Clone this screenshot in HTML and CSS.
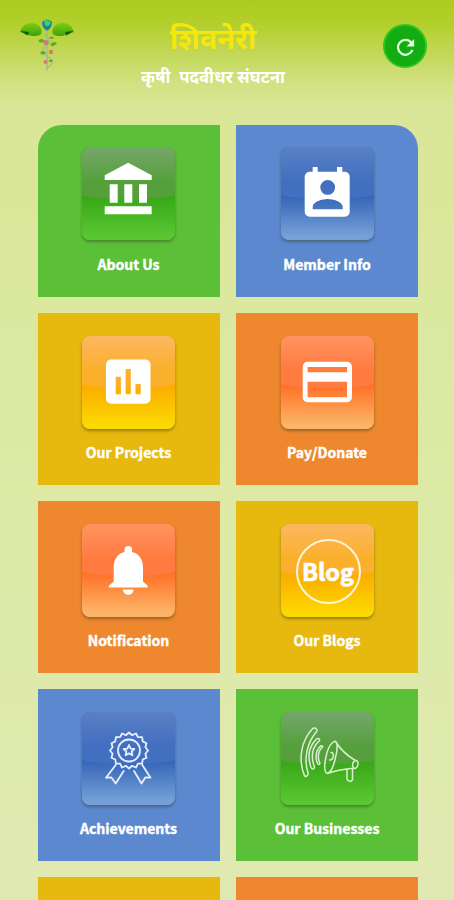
FILE: index.html
```html
<!DOCTYPE html>
<html lang="mr">
<head>
<meta charset="utf-8">
<meta name="viewport" content="width=device-width, initial-scale=1">
<title>शिवनेरी</title>
<link rel="stylesheet" href="styles.css">
</head>
<body>
<header class="header">
  <svg class="logo" viewBox="0 0 60 60">
    <defs>
      <linearGradient id="leaf" x1="0" y1="0" x2="0" y2="1"><stop offset="0" stop-color="#7bcf12"/><stop offset="1" stop-color="#3fa10c"/></linearGradient>
    </defs>
    <path fill="url(#leaf)" d="M3 15C5 8 12 5 17 6C23 8 26 13 24 17C21 20 14 19 11 18Z"/>
    <path fill="url(#leaf)" d="M57 15C55 8 48 5 43 6C37 8 34 13 36 17C39 20 46 19 49 18Z"/>
    <path fill="#145a08" d="M3.500 14L12 15L10.500 18.500ZM56.500 14L48 15L49.500 18.500Z"/>
    <path fill="#1684a6" d="M25 5Q30 0 35 5Q35 11 30 14Q25 11 25 5Z"/>
    <path fill="#45cf6b" d="M27 4Q31 1 34 6Q31 11 28 8Z"/>
    <path fill="none" stroke="#9dbd8f" stroke-width="1.300" d="M30 13V54M28 17Q36 23 29 29T31 40T30 51"/>
    <path fill="#58ac36" d="M21 24q4-4 7 0q-4 3-7 0M33 28q3-5 7-2q-3 5-7 2M23 36q3-4 6 0q-3 3-6 0M31 44q4-3 5 0q-2 2-5 0M32 21q3-3 5 0q-2 2-5 0"/>
    <g fill="#d17b79"><circle cx="29" cy="25.500" r="2.600"/><circle cx="34" cy="35" r="2.200"/><circle cx="28.500" cy="45" r="2"/></g>
  </svg>
  <div class="titles">
    <h1 class="title">शिवनेरी</h1>
    <p class="subtitle">कृषी&nbsp; पदवीधर संघटना</p>
  </div>
  <button class="refresh" aria-label="Refresh">
    <svg viewBox="0 0 24 24"><path fill="none" stroke="currentColor" stroke-width="2.300" d="M19.300 14.500A7.800 7.800 0 1 1 18 6.800"/><path fill="currentColor" d="M21 3V11H13Z"/></svg>
  </button>
</header>
<main class="grid">
  <a class="card green">
    <span class="tile"><svg viewBox="0 0 93 93" fill="currentColor"><path d="M22.700 33V28.300L46.200 15.700L69.700 28.300V33ZM27.700 37.300h8v18.400h-8ZM42.300 37.300h8v18.400h-8ZM57 37.300h8v18.400h-8ZM22.700 59.300h47v8h-47Z"/></svg></span>
    <span class="label">About Us</span>
  </a>
  <a class="card blue">
    <span class="tile"><svg viewBox="0 0 93 93" fill="currentColor"><path fill-rule="evenodd" d="M28.700 24.700H31.700V20H36.700V24.700H56V20H61.300V24.700H63.700A5 5 0 0 1 68.700 29.700V64.700A5 5 0 0 1 63.700 69.700H28.700A5 5 0 0 1 23.700 64.700V29.700A5 5 0 0 1 28.700 24.700ZM46.700 33A7.400 7.400 0 1 0 46.700 47.800A7.400 7.400 0 1 0 46.700 33ZM31.700 62.200H61.700V59.700C61.700 54.700 51.700 52 46.700 52S31.700 54.700 31.700 59.700Z"/></svg></span>
    <span class="label">Member Info</span>
  </a>
  <a class="card yellow">
    <span class="tile"><svg viewBox="0 0 93 93" fill="currentColor"><path fill-rule="evenodd" d="M29 23.500H63.500A5 5 0 0 1 68.500 28.500V62.700A5 5 0 0 1 63.500 67.700H29A5 5 0 0 1 24 62.700V28.500A5 5 0 0 1 29 23.500ZM33.700 40.700V58.300H38.900V40.700ZM43.600 33V58.300H48.800V33ZM53.500 48V58.300H58.700V48Z"/></svg></span>
    <span class="label">Our Projects</span>
  </a>
  <a class="card orange">
    <span class="tile"><svg viewBox="0 0 93 93" fill="currentColor"><path fill-rule="evenodd" d="M26.700 25.700H66A5 5 0 0 1 71 30.700V61.300A5 5 0 0 1 66 66.300H26.700A5 5 0 0 1 21.700 61.300V30.700A5 5 0 0 1 26.700 25.700ZM26.600 31.100V36.200H66.100V31.100ZM26.600 45.800V61.200H66.100V45.800Z"/></svg></span>
    <span class="label">Pay/Donate</span>
  </a>
  <a class="card orange">
    <span class="tile"><svg viewBox="0 0 93 93" fill="currentColor"><path d="M31.700 57.500V43.500C31.700 35 36 29.500 42.500 28V25.700A3.800 3.800 0 0 1 50.100 25.700V28C56.700 29.500 61 35 61 43.500V57.500L65.700 61.800V63.500H26.900V61.800ZM41 65.500H51.500C51.500 68.500 49.300 70.800 46.300 70.800S41 68.500 41 65.500Z"/></svg></span>
    <span class="label">Notification</span>
  </a>
  <a class="card yellow">
    <span class="tile"><span class="blog">Blog</span></span>
    <span class="label">Our Blogs</span>
  </a>
  <a class="card blue">
    <span class="tile"><svg class="line" viewBox="0 0 93 93"><path d="M47 20.500L50.100 23.200L54 21.500L55.900 25.200L60.100 25.200L60.700 29.400L64.500 31.300L63.400 35.200L66 38.500L63.400 41.700L64.500 45.700L60.700 47.500L60.100 51.700L55.900 51.700L54 55.500L50.100 53.800L47 56.500L43.900 53.800L40 55.500L38.100 51.700L33.900 51.700L33.300 47.500L29.500 45.700L30.600 41.700L28 38.500L30.600 35.200L29.500 31.300L33.300 29.400L33.900 25.200L38.100 25.200L40 21.500L43.900 23.200Z"/><circle cx="47" cy="38.500" r="11"/><path d="M47 33L48.600 36.600L52.400 37L49.600 39.500L50.400 43.300L47 41.400L43.600 43.300L44.400 39.500L41.600 37L45.400 36.600ZM33.700 53L24 65.700L29.200 65.300L33.700 71.500L41.700 59M60.300 53L68.500 65.700L63.500 65.300L59.500 71.500L52 59"/></svg></span>
    <span class="label">Achievements</span>
  </a>
  <a class="card green">
    <span class="tile"><svg class="line thin" viewBox="0 0 93 93"><path d="M35.700 17.500C36.500 18.300 36 19.300 35 20.200C26 31 22.500 47 27 61C27.500 63.500 25 65.500 23.400 63.500C17 47 20 29 31.700 16.600C33 15.300 35 16 35.700 17.500ZM38.500 28.500C30.500 36 30 46 33.500 55C33 57.500 31 57.500 30 55.500C26 44 28.500 34 35.500 27C37 26 39 26.500 38.500 28.500ZM41.500 35C36.500 40 36.500 46 39 51.500C38.500 53 37 52.500 36.500 51.500C34 45 35 38.500 39.500 34C41 33.500 42 34 41.500 35Z"/><path d="M52.300 30C57.500 26.500 56.500 38 54.500 45.500C53 53 49.500 62.500 45.500 61C41.500 58 45 35 52.300 30ZM54.500 29.500C58.500 36 64 42.500 74.500 48.500M46.500 61.500C54 58.500 61 57.500 72 56.200M74.500 48.500C78.500 48 77.500 56.500 73 56.500C70.500 54 71.500 49.500 74.500 48.500M50 40.500C54 40 52.500 48.500 48.500 48M66 57V67C67 70.500 71.500 69.500 71.500 67V56.500"/></svg></span>
    <span class="label">Our Businesses</span>
  </a>
  <a class="card yellow"></a>
  <a class="card orange"></a>
</main>
</body>
</html>
```

FILE: styles.css
```css
* { box-sizing: border-box; }

body {
  margin: 0;
  height: 900px;
  overflow: hidden;
  font-family: "Noto Sans CJK SC", "Noto Sans", sans-serif;
  color: #fff;
  background: linear-gradient(#adcb1c 0, #b3cf2c 24px, #c3d859 54px, #d2e180 82px, #d9e697 104px, #dae79b 200px, #dceaa5 500px, #e0e9b2 900px);
}

.header {
  display: grid;
  grid-template-columns: 60px 1fr 44px;
  align-items: start;
  height: 125px;
  padding: 0 27px 0 17px;
}

.logo { width: 60px; height: 60px; margin-top: 17px; }

.titles {
  text-align: center;
  font-family: "Noto Sans Devanagari", "Noto Sans", sans-serif;
  white-space: nowrap;
  padding-right: 34px;
}

.title {
  margin: 21px 0 0;
  font-size: 29px;
  line-height: 42px;
  font-weight: 700;
  color: #f5e60b;
}

.subtitle {
  margin: 4px 0 0;
  font-size: 16.800px;
  line-height: 24px;
  font-weight: 700;
}

.refresh {
  display: grid;
  place-items: center;
  width: 44px;
  height: 44px;
  margin-top: 24px;
  padding: 0;
  border: 2px solid #2fc51b;
  border-radius: 50%;
  background: #13ac13;
  color: #eaffdf;
}

.refresh svg { width: 23px; height: 23px; margin-top: 2px; }

.grid {
  display: grid;
  grid-template-columns: 182px 182px;
  grid-auto-rows: 172px;
  gap: 16px 16.500px;
  height: 775px;
  overflow: hidden;
  margin-left: 37.500px;
}

.card {
  display: flex;
  flex-direction: column;
  align-items: center;
  padding-top: 22px;
}

.card:nth-child(1) { border-top-left-radius: 24px; }
.card:nth-child(2) { border-top-right-radius: 24px; }

.green { background: #5bc038; --top: #76a66b; --mid: #55a03c; --low: #35a515; --end: #5ac632; }
.blue { background: #5c88d0; --top: #5a80c5; --mid: #426fc0; --low: #3162b5; --end: #75a0d8; }
.yellow { background: #e7b80d; --top: #fbb762; --mid: #fbb02c; --low: #fba800; --end: #fbd900; }
.orange { background: #ee872d; --top: #ff945f; --mid: #ff7b40; --low: #ff6c22; --end: #fcb568; }

.tile {
  position: relative;
  display: grid;
  place-items: center;
  width: 93px;
  height: 93px;
  border-radius: 8px;
  overflow: hidden;
  background: linear-gradient(var(--low) 50%, var(--end) 96%);
  box-shadow: 0 2px 3px rgb(50 60 30 / 45%);
}

.card:nth-child(n+3) { padding-top: 23px; }
.card:nth-child(n+3) .label { margin-top: 13px; }

.tile::before {
  content: "";
  position: absolute;
  inset: 0 0 41px;
  border-radius: 0 0 50% 50% / 0 0 5px 5px;
  background: linear-gradient(var(--top), var(--mid) 65%);
}

.tile svg { position: relative; width: 93px; height: 93px; }

.line {
  fill: none;
  stroke: #e4efff;
  stroke-width: 1.800;
  stroke-linejoin: round;
  stroke-linecap: round;
}

.thin { stroke: #d8f2cc; stroke-width: 1.500; }

.blog {
  position: relative;
  display: grid;
  place-items: center;
  width: 65px;
  height: 65px;
  border: 2px solid #fff5d5;
  border-radius: 50%;
  margin: 1px 0 0 2px;
  font-size: 23.500px;
  font-weight: 700;
  line-height: 30px;
  -webkit-text-stroke: 0.700px #fff;
}

.label {
  margin-top: 14px;
  font-size: 14px;
  font-weight: 700;
  line-height: 20px;
  -webkit-text-stroke: 0.400px #fff;
}
```
